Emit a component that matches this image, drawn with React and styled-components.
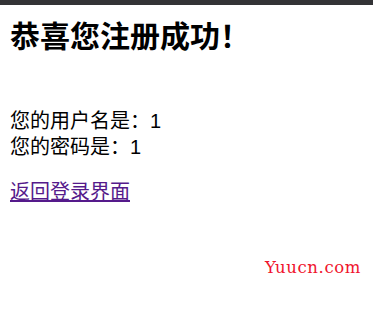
import React from 'react';
import styled, { createGlobalStyle } from 'styled-components';

const GlobalStyle = createGlobalStyle`
  html, body {
    margin: 0;
    padding: 0;
    background: #ffffff;
  }
  body {
    font-family: "Liberation Sans", "Noto Sans CJK SC", sans-serif;
  }
`;

const Page = styled.div`
  position: relative;
  width: 373px;
  height: 323px;
  border-top: 5px solid #333336;
  box-sizing: border-box;
  padding: 0 10px;
`;

const Title = styled.h1`
  margin: 12px 0 0 0;
  font-size: 30px;
  font-weight: 700;
  line-height: 40px;
  color: #000;
`;

const Info = styled.div`
  margin-top: 51px;
  font-size: 20px;
  line-height: 26px;
  color: #000;
`;

const BackLink = styled.a`
  display: inline-block;
  margin-top: 19px;
  font-size: 20px;
  line-height: 26px;
  color: #551a8b;
  text-decoration: underline;
`;

const Watermark = styled.span`
  position: absolute;
  right: 12px;
  top: 255px;
  font-family: "DejaVu Serif", serif;
  font-size: 16.5px;
  line-height: 16px;
  letter-spacing: 0.6px;
  color: #f0142d;
`;

export default function App() {
  return (
    <>
      <GlobalStyle />
      <Page>
        <Title>恭喜您注册成功！</Title>
        <Info>
          <div>您的用户名是：1</div>
          <div>您的密码是：1</div>
        </Info>
        <BackLink href="#">返回登录界面</BackLink>
        <Watermark>Yuucn.com</Watermark>
      </Page>
    </>
  );
}
